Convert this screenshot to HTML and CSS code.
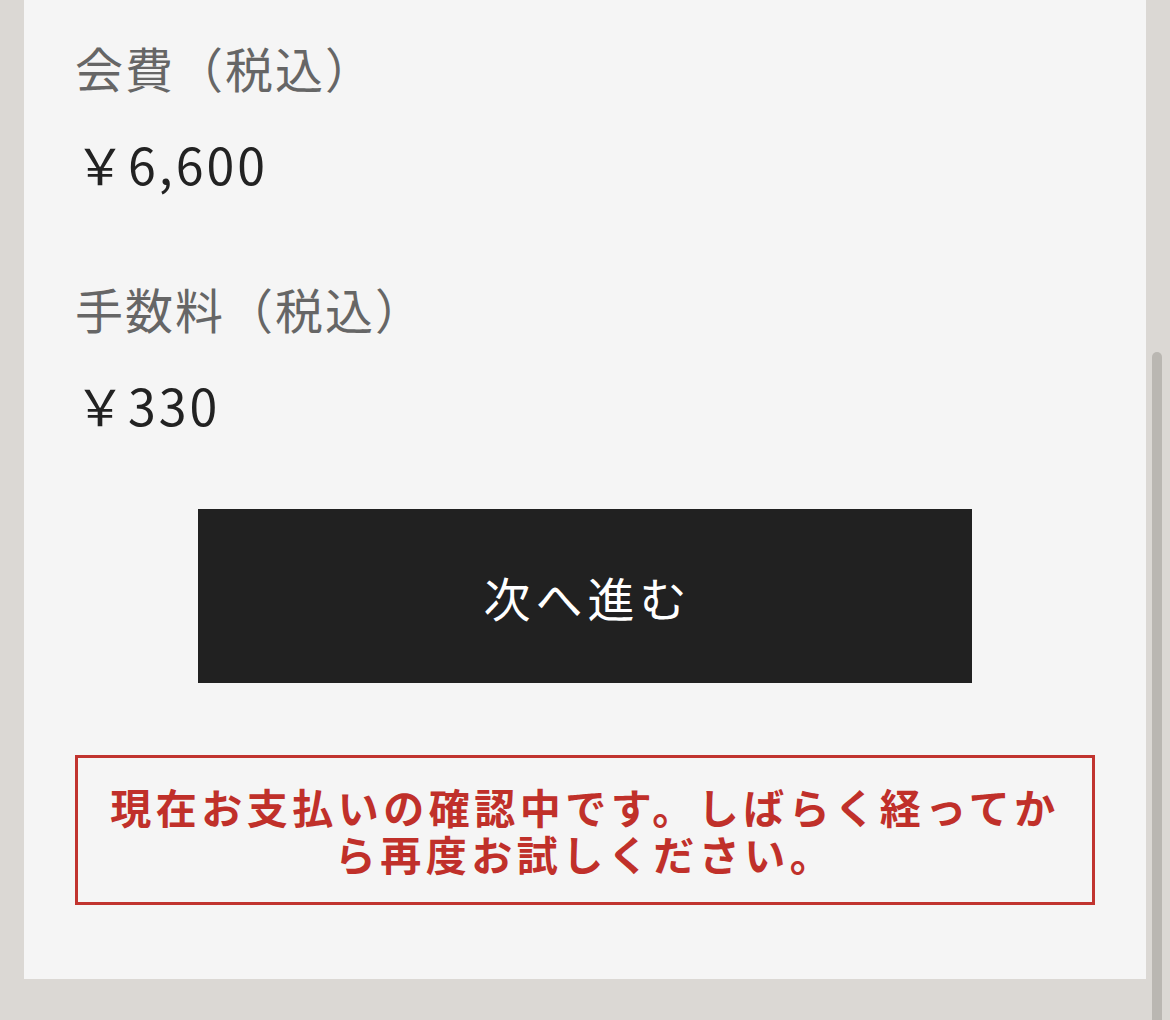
FILE: index.html
```html
<!DOCTYPE html>
<html lang="ja">
<head>
<meta charset="utf-8">
<title>会費</title>
<link rel="stylesheet" href="styles.css">
</head>
<body>
<main class="panel">
  <section class="field">
    <h2 class="label">会費（税込）</h2>
    <p class="price">￥6,600</p>
  </section>
  <section class="field">
    <h2 class="label">手数料（税込）</h2>
    <p class="price">￥330</p>
  </section>
  <div class="actions">
    <button class="next" type="button">次へ進む</button>
  </div>
  <div class="error">現在お支払いの確認中です。しばらく経ってから再度お試しください。</div>
</main>
<div class="scrollbar"></div>
</body>
</html>
```

FILE: styles.css
```css
html, body {
  margin: 0;
  padding: 0;
}
body {
  background: #dbd8d4;
  font-family: "Noto Sans CJK JP", "Noto Sans", sans-serif;
  height: 1020px;
  overflow: hidden;
  position: relative;
}
.panel {
  margin: 0 24px;
  background: #f5f5f5;
  padding: 31px 51px 74px;
  display: flex;
  flex-direction: column;
}
.field {
  display: flex;
  flex-direction: column;
  gap: 24px;
}
.field + .field {
  margin-top: 73px;
}
.label {
  margin: 0;
  font-size: 48px;
  line-height: 72px;
  font-weight: 400;
  letter-spacing: 2px;
  color: #666;
}
.price {
  margin: 0;
  font-size: 50px;
  line-height: 72px;
  letter-spacing: 3px;
  color: #222;
}
.actions {
  margin-top: 69px;
  display: flex;
  justify-content: center;
}
.next {
  width: 774px;
  height: 174px;
  border: 0;
  border-radius: 0;
  background: #212121;
  color: #fff;
  font-family: inherit;
  font-size: 47px;
  letter-spacing: 5px;
  padding: 0 0 0 5px;
}
.error {
  margin-top: 72px;
  border: 3px solid #c1342f;
  padding: 25px 25px;
  color: #c0302a;
  font-weight: 700;
  font-size: 41px;
  line-height: 47px;
  letter-spacing: 4.5px;
  text-align: center;
}
.scrollbar {
  position: absolute;
  left: 1152px;
  top: 352px;
  width: 10px;
  height: 700px;
  border-radius: 5px;
  background: #bab7b2;
}
```
